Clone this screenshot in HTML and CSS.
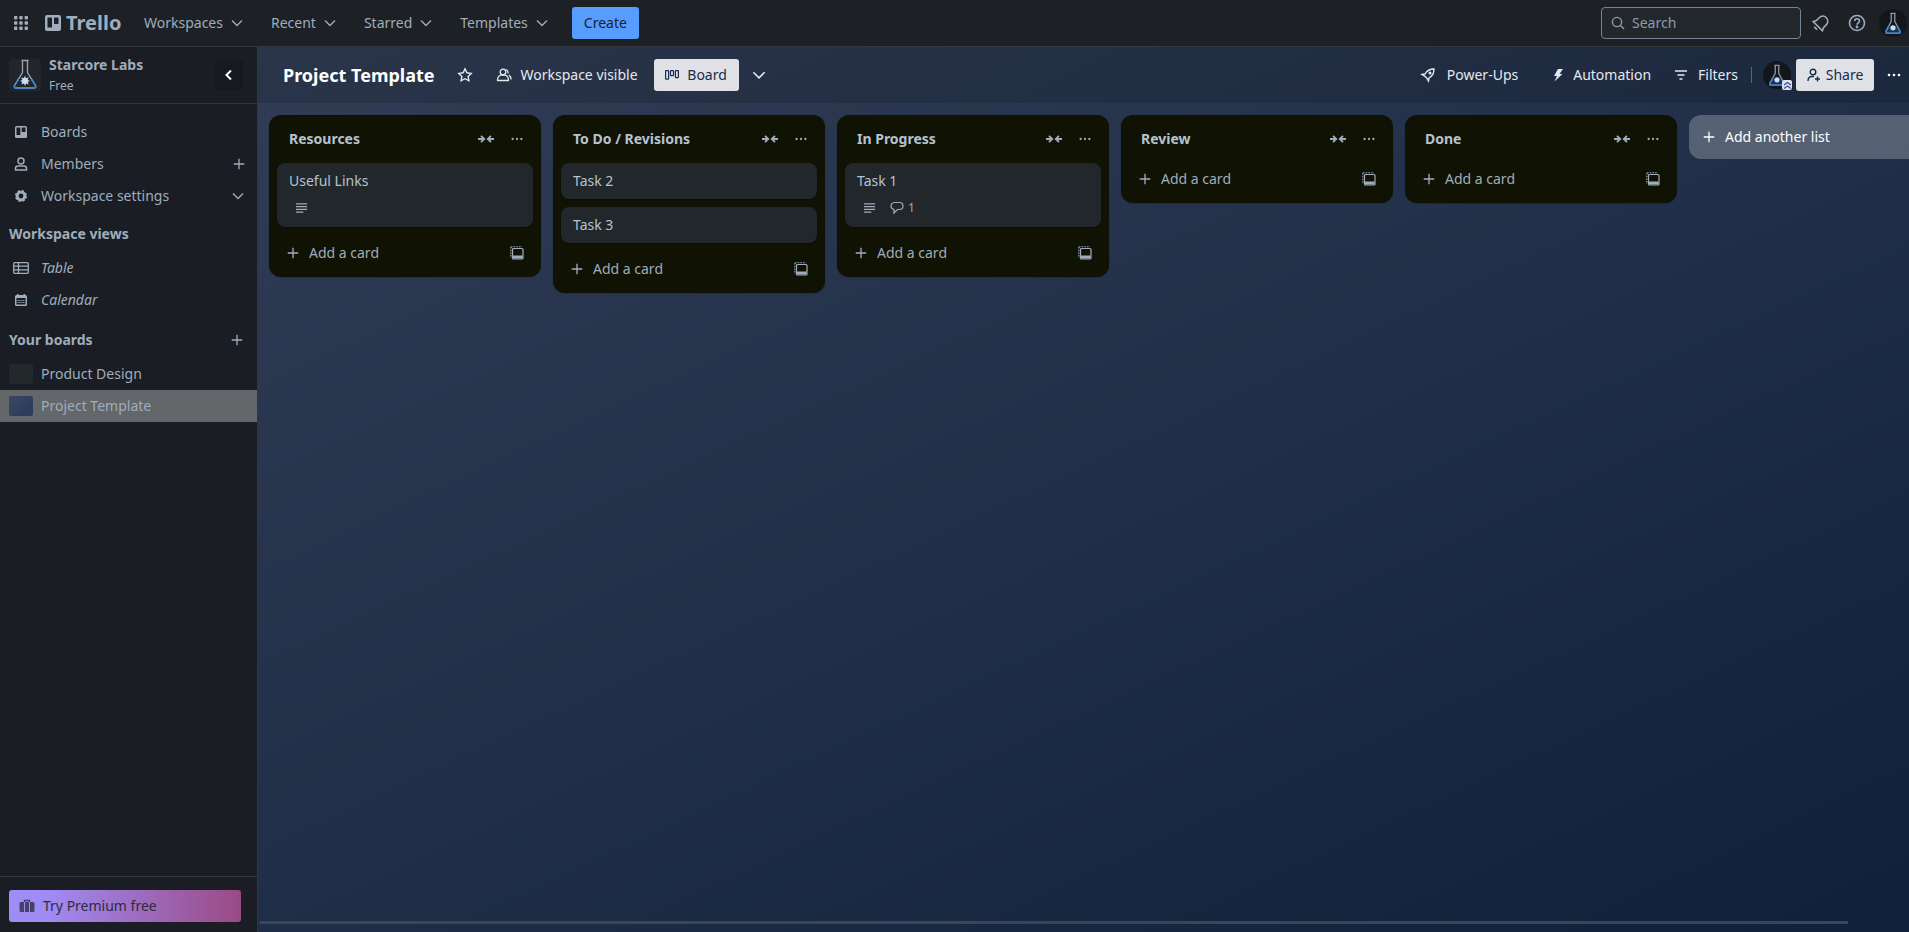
FILE: index.html
```html
<!doctype html>
<html lang="en">
<head>
<meta charset="utf-8">
<title>Project Template | Trello</title>
<link rel="stylesheet" href="styles.css">
</head>
<body>

<svg class="defs" width="0" height="0">
	<symbol id="chev" viewBox="0 0 16 16"><path d="M3 5.500l5 5 5-5" fill="none" stroke="currentColor" stroke-width="1.400"/></symbol>
	<symbol id="plus" viewBox="0 0 16 16"><path d="M8 2v12M2 8h12" fill="none" stroke="currentColor" stroke-width="1.500"/></symbol>
	<symbol id="dots" viewBox="0 0 16 16"><circle cx="3" cy="8" r="1.300" fill="currentColor"/><circle cx="8" cy="8" r="1.300" fill="currentColor"/><circle cx="13" cy="8" r="1.300" fill="currentColor"/></symbol>
	<symbol id="collapse" viewBox="0 0 18 12"><path d="M1 6h5M4 2.800L7.200 6 4 9.200M17 6h-5M14 2.800L10.800 6 14 9.200" fill="none" stroke="currentColor" stroke-width="1.900"/></symbol>
	<symbol id="template" viewBox="0 0 14 14"><path d="M3.500 2.500h8.500a1 1 0 0 1 1 1v8.500a1 1 0 0 1-1 1H3.500a1 1 0 0 1-1-1V3.500a1 1 0 0 1 1-1z" fill="none" stroke="currentColor" stroke-width="1.200"/><path d="M3 9.500h9.500v3H3z" fill="currentColor"/><path d="M1 .8h11M.8 1v11" fill="none" stroke="currentColor" stroke-width="1.100" stroke-dasharray="1.500 1.200"/></symbol>
	<symbol id="desc" viewBox="0 0 14 12"><path d="M1 1.500h12M1 4.500h12M1 7.500h12M1 10.500h8" fill="none" stroke="currentColor" stroke-width="1.200"/></symbol>
	<symbol id="flask" viewBox="0 0 32 32"><rect width="32" height="32" rx="4" fill="#22262c"/><path d="M12.500 1.500h7M13.500 1.500v12L5.500 26.500q-.8 2.500 1.700 2.500h17.600q2.500 0 1.700-2.500L18.500 13.500V1.500" fill="none" stroke="#9aa5b2" stroke-width="1.300"/><path d="M9.500 20L5.500 26.500q-.8 2.500 1.700 2.500h17.600q2.500 0 1.700-2.500L22.500 20" fill="none" stroke="#3f87d0" stroke-width="1.600"/><path d="M16 16.500l1 2.700 2.700-1-1 2.800 2.300 1-2.300 1 1 2.500-2.700-1-1 2.500-1-2.500-2.700 1 1-2.500-2.300-1 2.300-1-1-2.800 2.700 1z" fill="#c6def5"/></symbol>
	<symbol id="flask-round" viewBox="0 0 32 32"><circle cx="16" cy="16" r="16" fill="#14171a"/><path d="M13 5h6M14 5v9L8 25.500q-.6 2 1 2h14q1.600 0 1-2L18 14V5" fill="none" stroke="#8c97a5" stroke-width="1.500"/><path d="M11 20l-3 5.500q-.6 2 1 2h14q1.600 0 1-2L21 20" fill="#1c3350" stroke="#3f87d0" stroke-width="1.800"/><circle cx="16" cy="21.500" r="3" fill="#c6def5"/></symbol>
</svg>

<header class="topnav">
	<svg class="apps" width="14" height="14" viewBox="0 0 14 14" fill="currentColor"><rect width="3.400" height="3.400" rx=".8"/><rect x="5.300" width="3.400" height="3.400" rx=".8"/><rect x="10.600" width="3.400" height="3.400" rx=".8"/><rect y="5.300" width="3.400" height="3.400" rx=".8"/><rect x="5.300" y="5.300" width="3.400" height="3.400" rx=".8"/><rect x="10.600" y="5.300" width="3.400" height="3.400" rx=".8"/><rect y="10.600" width="3.400" height="3.400" rx=".8"/><rect x="5.300" y="10.600" width="3.400" height="3.400" rx=".8"/><rect x="10.600" y="10.600" width="3.400" height="3.400" rx=".8"/></svg>
	<div class="logo">
		<svg width="16" height="16" viewBox="0 0 16 16"><rect width="16" height="16" rx="2" fill="currentColor"/><rect x="2.500" y="2.500" width="4.500" height="10" rx=".6" fill="#1d2125"/><rect x="9" y="2.500" width="4.500" height="6.500" rx=".6" fill="#1d2125"/></svg>
		<span>Trello</span>
	</div>
	<nav class="menu">
		<a>Workspaces <svg width="16" height="16"><use href="#chev"/></svg></a>
		<a>Recent <svg width="16" height="16"><use href="#chev"/></svg></a>
		<a>Starred <svg width="16" height="16"><use href="#chev"/></svg></a>
		<a>Templates <svg width="16" height="16"><use href="#chev"/></svg></a>
	</nav>
	<button class="create">Create</button>
	<div class="search">
		<svg width="14" height="14" viewBox="0 0 14 14" fill="none" stroke="currentColor" stroke-width="1.400"><circle cx="6" cy="6" r="4.600"/><path d="M9.500 9.500L13 13"/></svg>
		<span>Search</span>
	</div>
	<svg class="nav-icon" width="20" height="20" viewBox="0 0 20 20" fill="none" stroke="currentColor" stroke-width="1.600"><g transform="rotate(45 10 10)"><path d="M10 2.500c-3.300 0-5 2.500-5 5.500v3.500L3.500 14.500h13L15 11.500V8c0-3-1.700-5.500-5-5.500z"/><path d="M8 17.500h4"/></g></svg>
	<svg class="nav-icon" width="20" height="20" viewBox="0 0 20 20" fill="none" stroke="currentColor" stroke-width="1.600"><circle cx="10" cy="10" r="7.500"/><path d="M7.700 8c0-3 4.800-3 4.800 0 0 2-2.500 1.800-2.500 3.800"/><circle cx="10" cy="14" r=".6" fill="currentColor"/></svg>
	<svg class="nav-avatar" width="28" height="28"><use href="#flask-round"/></svg>
</header>

<div class="layout">
	<aside class="sidebar">
		<div class="side-head">
			<svg width="32" height="32"><use href="#flask"/></svg>
			<div class="ws-name">
				<b>Starcore Labs</b>
				<small>Free</small>
			</div>
			<button class="collapse"><svg width="12" height="12" viewBox="0 0 12 12" fill="none" stroke="currentColor" stroke-width="2"><path d="M8 1.500L3.500 6 8 10.500"/></svg></button>
		</div>
		<div class="side-body">
			<div class="row">
				<svg width="16" height="16" viewBox="0 0 16 16"><rect x="2" y="2" width="12" height="12" rx="1.500" fill="currentColor"/><rect x="3.500" y="3.500" width="3.800" height="7.500" fill="#1a1d23"/><rect x="8.700" y="3.500" width="3.800" height="4.500" fill="#1a1d23"/></svg>
				<span>Boards</span>
			</div>
			<div class="row">
				<svg width="16" height="16" viewBox="0 0 16 16" fill="none" stroke="currentColor" stroke-width="1.500"><circle cx="8" cy="5" r="3"/><path d="M2.500 14v-1.500q0-2.500 2.500-2.500h6q2.500 0 2.500 2.500V14z"/></svg>
				<span>Members</span>
				<svg class="row-end" width="14" height="14"><use href="#plus"/></svg>
			</div>
			<div class="row">
				<svg width="16" height="16" viewBox="0 0 16 16" fill="none" stroke="currentColor" stroke-width="2.800"><circle cx="8" cy="8" r="3.800"/><circle cx="8" cy="8" r="5.300" stroke-width="1.400" stroke-dasharray="2.500 1.660"/></svg>
				<span>Workspace settings</span>
				<svg class="row-end" width="16" height="16"><use href="#chev"/></svg>
			</div>
			<h4 class="side-title first">Workspace views</h4>
			<div class="row view">
				<svg width="16" height="16" viewBox="0 0 16 16" fill="none" stroke="currentColor" stroke-width="1.300"><rect x=".7" y="2.700" width="14.600" height="10.600" rx="1"/><path d="M.7 6.200h14.600M.7 9.800h14.600M5.500 2.700v10.600"/></svg>
				<span>Table</span>
			</div>
			<div class="row view">
				<svg width="16" height="16" viewBox="0 0 16 16"><rect x="2" y="3" width="12" height="11" rx="1.500" fill="currentColor"/><rect x="4" y="2" width="1.500" height="2" fill="currentColor"/><rect x="10.500" y="2" width="1.500" height="2" fill="currentColor"/><rect x="3.500" y="6" width="9" height="6.500" fill="#1a1d23"/><path d="M4.500 8.500h7M4.500 10.500h7" stroke="currentColor" stroke-dasharray="1.200 .7"/></svg>
				<span>Calendar</span>
			</div>
			<h4 class="side-title">Your boards <svg width="14" height="14"><use href="#plus"/></svg></h4>
			<div class="row board-row">
				<i class="thumb thumb-design"></i>
				<span>Product Design</span>
			</div>
			<div class="row board-row active">
				<i class="thumb thumb-project"></i>
				<span>Project Template</span>
			</div>
		</div>
		<div class="side-foot">
			<button class="premium">
				<svg width="16" height="14" viewBox="0 0 16 14"><path d="M5.500 3.500V1.500h5v2" fill="none" stroke="#44426a" stroke-width="1.300"/><path d="M2 3h12q1.500 0 1.500 1.500v7q0 1.500-1.500 1.500H2q-1.500 0-1.500-1.500v-7Q.5 3 2 3z" fill="#44426a"/><path d="M5.500 3v10M10.500 3v10" stroke="#a68cf0" stroke-width="1"/></svg>
				Try Premium free
			</button>
		</div>
	</aside>

	<main class="board">
		<div class="boardbar">
			<h1>Project Template</h1>
			<svg class="star" width="16" height="16" viewBox="0 0 16 16" fill="none" stroke="currentColor" stroke-width="1.400"><path d="M8 1.800l1.900 4 4.300.6-3.100 3 .8 4.400L8 11.700l-3.900 2.100.8-4.400-3.100-3 4.300-.6z"/></svg>
			<a class="bar-link visible">
				<svg width="16" height="16" viewBox="0 0 16 16" fill="none" stroke="currentColor" stroke-width="1.300"><circle cx="7" cy="5" r="2.800"/><path d="M1.500 13.500q0-4.500 3.500-5.500h4q3.500 1 3.500 5.500z"/><path d="M10 2.500q2.500 1 2 4M13 8q2 1.500 2 4.500"/></svg>
				Workspace visible
			</a>
			<button class="view-btn">
				<svg width="14" height="12" viewBox="0 0 14 12" fill="none" stroke="currentColor" stroke-width="1.200"><rect x=".6" y="1.600" width="3" height="8.500" rx=".6"/><rect x="5.500" y="1.600" width="3" height="5" rx=".6"/><rect x="10.400" y="1.600" width="3" height="7" rx=".6"/></svg>
				Board
			</button>
			<svg class="view-chev" width="18" height="18"><use href="#chev"/></svg>

			<div class="bar-right">
				<a class="bar-link powerups">
					<svg width="16" height="16" viewBox="0 0 16 16" fill="none" stroke="currentColor" stroke-width="1.400"><path d="M14 2c-4 0-7 1.500-9 5L2 7.500l3 1.800 1.700 1.700L8.500 14l.5-3c3.500-2 5-5 5-9z"/><circle cx="10" cy="6" r=".8" fill="currentColor"/></svg>
					Power-Ups
				</a>
				<a class="bar-link automation">
					<svg width="12" height="14" viewBox="0 0 12 14" fill="currentColor"><path d="M6 1h5L7.500 6H10.500L2.500 13.500 5 8H2z"/></svg>
					Automation
				</a>
				<a class="bar-link filters">
					<svg width="14" height="12" viewBox="0 0 14 12" fill="none" stroke="currentColor" stroke-width="1.500"><path d="M1 2h12M3.500 6h7M5.500 10h3"/></svg>
					Filters
				</a>
				<span class="divider"></span>
				<div class="member">
					<svg width="28" height="28"><use href="#flask-round"/></svg>
					<span class="badge"><svg width="9" height="9" viewBox="0 0 9 9" fill="none" stroke="#3a4aa8" stroke-width="1.200"><path d="M1 4l3.500-2.500L8 4M1 7.500L4.500 5 8 7.500"/></svg></span>
				</div>
				<button class="share">
					<svg width="14" height="14" viewBox="0 0 14 14" fill="none" stroke="currentColor" stroke-width="1.400"><circle cx="6" cy="4" r="2.800"/><path d="M1 13q0-4.500 4-4.500h2M10.500 8.500v5M8 11h5"/></svg>
					Share
				</button>
				<svg class="bar-dots" width="16" height="16"><use href="#dots"/></svg>
			</div>
		</div>

		<div class="lists">
			<section class="list">
				<div class="list-head">
					<h2>Resources</h2>
					<svg width="18" height="12"><use href="#collapse"/></svg>
					<svg width="14" height="14"><use href="#dots"/></svg>
				</div>
				<div class="cards">
					<article class="card">
						<p>Useful Links</p>
						<div class="badges"><svg width="13" height="12"><use href="#desc"/></svg></div>
					</article>
				</div>
				<div class="list-foot">
					<svg width="14" height="14"><use href="#plus"/></svg>
					<span>Add a card</span>
					<svg class="tpl" width="14" height="14"><use href="#template"/></svg>
				</div>
			</section>

			<section class="list">
				<div class="list-head">
					<h2>To Do / Revisions</h2>
					<svg width="18" height="12"><use href="#collapse"/></svg>
					<svg width="14" height="14"><use href="#dots"/></svg>
				</div>
				<div class="cards">
					<article class="card"><p>Task 2</p></article>
					<article class="card"><p>Task 3</p></article>
				</div>
				<div class="list-foot">
					<svg width="14" height="14"><use href="#plus"/></svg>
					<span>Add a card</span>
					<svg class="tpl" width="14" height="14"><use href="#template"/></svg>
				</div>
			</section>

			<section class="list">
				<div class="list-head">
					<h2>In Progress</h2>
					<svg width="18" height="12"><use href="#collapse"/></svg>
					<svg width="14" height="14"><use href="#dots"/></svg>
				</div>
				<div class="cards">
					<article class="card">
						<p>Task 1</p>
						<div class="badges">
							<svg width="13" height="12"><use href="#desc"/></svg>
							<svg class="comment" width="14" height="14" viewBox="0 0 14 14" fill="none" stroke="currentColor" stroke-width="1.200"><path d="M4.500 1.500h5q3.500 0 3.500 3.500T9.500 8.500H7.500L4 12V8.500Q1 8 1 5t3.500-3.500z"/></svg>
							<span>1</span>
						</div>
					</article>
				</div>
				<div class="list-foot">
					<svg width="14" height="14"><use href="#plus"/></svg>
					<span>Add a card</span>
					<svg class="tpl" width="14" height="14"><use href="#template"/></svg>
				</div>
			</section>

			<section class="list">
				<div class="list-head">
					<h2>Review</h2>
					<svg width="18" height="12"><use href="#collapse"/></svg>
					<svg width="14" height="14"><use href="#dots"/></svg>
				</div>
				<div class="list-foot">
					<svg width="14" height="14"><use href="#plus"/></svg>
					<span>Add a card</span>
					<svg class="tpl" width="14" height="14"><use href="#template"/></svg>
				</div>
			</section>

			<section class="list">
				<div class="list-head">
					<h2>Done</h2>
					<svg width="18" height="12"><use href="#collapse"/></svg>
					<svg width="14" height="14"><use href="#dots"/></svg>
				</div>
				<div class="list-foot">
					<svg width="14" height="14"><use href="#plus"/></svg>
					<span>Add a card</span>
					<svg class="tpl" width="14" height="14"><use href="#template"/></svg>
				</div>
			</section>

			<button class="add-list">
				<svg width="14" height="14"><use href="#plus"/></svg>
				Add another list
			</button>
		</div>

		<div class="scrollbar"></div>
	</main>
</div>

</body>
</html>
```

FILE: styles.css
```css
* { box-sizing: border-box; }
body { margin: 0; height: 100vh; overflow: hidden; display: flex; flex-direction: column; font: 14px/20px "Noto Sans", sans-serif; color: #9fadbc; background: #1d2125; }
button { font: inherit; border: none; cursor: pointer; }
h1, h2, h4, p { margin: 0; }
svg { display: block; flex: none; }
.defs { position: absolute; }

/* top nav */
.topnav { flex: none; height: 47px; display: flex; align-items: center; padding: 0 2px 0 14px; background: #1d2125; border-bottom: 1px solid #31383d; }
.logo { display: flex; align-items: center; gap: 5px; margin-left: 17px; width: 75px; color: #9fadbc; }
.logo span { font-size: 20px; font-weight: 700; }
.menu { display: flex; gap: 26px; margin-left: 24px; }
.menu a { display: flex; align-items: center; gap: 6px; white-space: nowrap; }
.create { margin-left: 22px; width: 67px; height: 32px; border-radius: 3px; background: #579dff; color: #1d2125; }
.search { margin-left: auto; width: 200px; height: 32px; display: flex; align-items: center; gap: 7px; padding-left: 9px; border: 1px solid #738496; border-radius: 4px; background: #22272b; color: #8c9bab; }
.nav-icon { margin-left: 10px; }
.nav-icon + .nav-icon { margin-left: 16px; }
.nav-avatar { margin-left: 12px; }

.layout { flex: 1; min-height: 0; display: flex; }

/* sidebar */
.sidebar { flex: none; width: 258px; display: flex; flex-direction: column; background: #1a1d23; border-right: 1px solid #31383d; }
.side-head { flex: none; height: 57px; display: flex; align-items: center; padding: 0 14px 1px 9px; border-bottom: 1px solid #31383d; }
.ws-name { flex: 1; margin-left: 8px; }
.ws-name b { display: block; font-weight: 700; line-height: 20px; }
.ws-name small { display: block; font-size: 12px; line-height: 16px; margin-top: 3px; }
.collapse { width: 28px; height: 30px; display: flex; align-items: center; justify-content: center; border-radius: 3px; background: #16191d; color: #fff; }
.side-body { flex: 1; padding-top: 12px; }
.row { height: 32px; display: flex; align-items: center; padding: 0 11px 0 13px; gap: 12px; }
.row-end { margin-left: auto; }
.side-title { height: 36px; display: flex; align-items: center; justify-content: space-between; padding: 0 13px 0 9px; font-size: 14px; font-weight: 700; }
.side-title.first { margin-top: 4px; }
.view span { font-style: italic; }
.view + .side-title { margin-top: 6px; }
.board-row { padding-left: 9px; gap: 8px; }
.active { background: #636769; }
.thumb { width: 24px; height: 20px; border-radius: 2px; }
.thumb-design { background: #23292b; }
.thumb-project { background: linear-gradient(135deg, #3a4763, #2a3a5c); }
.side-foot { flex: none; height: 56px; padding: 13px 0 0 9px; border-top: 1px solid #31383d; }
.premium { width: 232px; height: 32px; display: flex; align-items: center; gap: 8px; padding: 0 10px; border-radius: 3px; background: linear-gradient(90deg, #a08cf5 15%, #9a4a84); color: #2e2b40; }

/* board */
.board { flex: 1; min-width: 0; display: flex; flex-direction: column; overflow: hidden; background: linear-gradient(155deg, #313d55, #10203a); }
.boardbar { flex: none; height: 56px; display: flex; align-items: center; padding: 0 7px 0 25px; color: #e4e9ef; background: rgba(0, 0, 0, .13); }
.boardbar h1 { font-size: 18px; font-weight: 700; line-height: 32px; color: #fff; }
.star { margin-left: 22px; }
.bar-link { display: flex; align-items: center; white-space: nowrap; }
.visible { margin-left: 23px; gap: 9px; }
.view-btn { margin-left: 16px; width: 85px; height: 32px; display: flex; align-items: center; justify-content: center; gap: 8px; border-radius: 3px; background: #dfe1e6; color: #172b4d; }
.view-chev { margin-left: 11px; }
.bar-right { margin-left: auto; display: flex; align-items: center; }
.powerups { gap: 11px; }
.automation { gap: 9px; margin-left: 34px; }
.filters { gap: 10px; margin-left: 23px; }
.divider { width: 1px; height: 16px; margin: 0 11px 0 13px; background: #5a6678; }
.member { position: relative; }
.badge { position: absolute; right: -1px; bottom: -1px; width: 10px; height: 10px; display: flex; align-items: center; justify-content: center; background: #dfe1e6; border-radius: 2px; }
.share { margin-left: 5px; width: 78px; height: 32px; display: flex; align-items: center; justify-content: center; gap: 5px; border-radius: 3px; background: #dfe1e6; color: #172b4d; }
.bar-dots { margin-left: 12px; color: #fff; }

/* lists */
.lists { flex: 1; display: flex; align-items: flex-start; gap: 12px; padding: 12px 0 0 11px; }
.list { flex: none; width: 272px; border-radius: 12px; background: #101204; box-shadow: 0 1px 1px #091e4240, 0 0 1px #091e424f; }
.list-head { height: 48px; display: flex; align-items: center; gap: 15px; padding: 0 17px 0 20px; color: #9fadbc; }
.list-head h2 { flex: 1; font-size: 14px; font-weight: 700; color: #b6c2cf; }
.cards { display: flex; flex-direction: column; gap: 8px; padding: 0 8px 10px; }
.card { min-height: 36px; padding: 8px 12px; border-radius: 8px; background: #22272b; color: #b6c2cf; box-shadow: 0 1px 1px #00000040; }
.badges { display: flex; align-items: center; height: 20px; margin: 7px 0 1px; padding-left: 6px; color: #9fadbc; font-size: 12px; }
.comment { margin-left: 14px; margin-right: 4px; }
.list-foot { height: 32px; margin-bottom: 8px; display: flex; align-items: center; gap: 9px; padding: 0 17px 0 17px; color: #9fadbc; }
.tpl { margin-left: auto; }
.add-list { flex: none; width: 272px; height: 44px; display: flex; align-items: center; gap: 9px; padding: 0 0 0 13px; border-radius: 12px; background: rgba(255, 255, 255, .24); color: #fff; }
.scrollbar { flex: none; width: 1589px; height: 3px; margin: 0 0 8px 1px; border-radius: 2px 0 0 2px; background: #3a4558; }
```
